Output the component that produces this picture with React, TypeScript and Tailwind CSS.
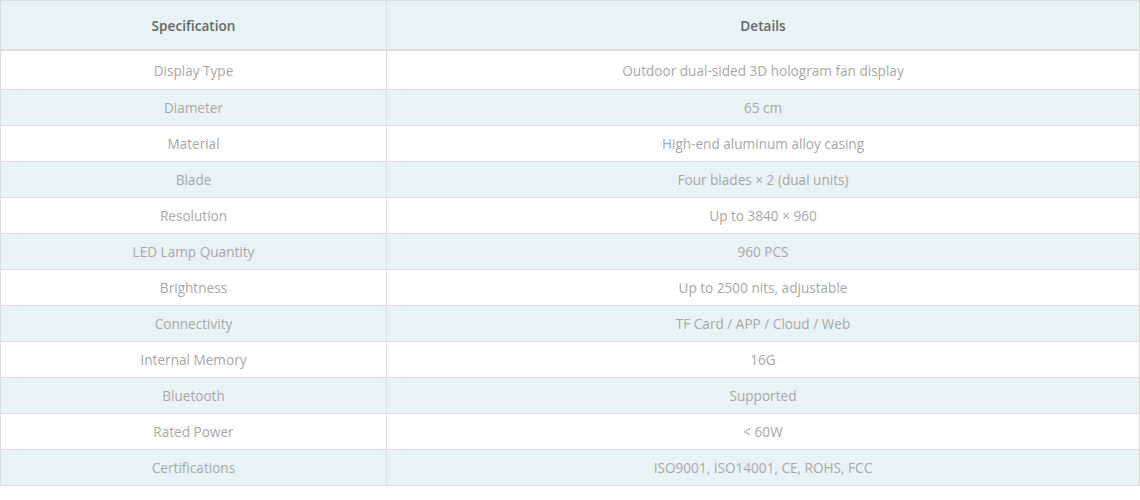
const specs: [string, string][] = [
  ["Display Type", "Outdoor dual-sided 3D hologram fan display"],
  ["Diameter", "65 cm"],
  ["Material", "High-end aluminum alloy casing"],
  ["Blade", "Four blades × 2 (dual units)"],
  ["Resolution", "Up to 3840 × 960"],
  ["LED Lamp Quantity", "960 PCS"],
  ["Brightness", "Up to 2500 nits, adjustable"],
  ["Connectivity", "TF Card / APP / Cloud / Web"],
  ["Internal Memory", "16G"],
  ["Bluetooth", "Supported"],
  ["Rated Power", "< 60W"],
  ["Certifications", "ISO9001, ISO14001, CE, ROHS, FCC"],
];

export default function App() {
  return (
    <div className="w-[1140px] bg-white font-['Open_Sans',sans-serif]">
      <div className="border border-[#dddddd]">
        {/* header */}
        <div className="grid grid-cols-[386px_1fr] h-[50px] bg-[#e9f3f5] border-b-2 border-[#dddddd] text-[13.6px] font-semibold text-[#666666]">
          <div className="flex items-center justify-center border-r border-[#dddddd] pt-[2px]">Specification</div>
          <div className="flex items-center justify-center pt-[2px]">Details</div>
        </div>
        {specs.map(([name, value], i) => (
          <div
            key={name}
            className={`grid grid-cols-[386px_1fr] text-[13.6px] text-[#a8a8a8] ${i === 0 ? "h-[39px]" : i === specs.length - 1 ? "h-[35px]" : "h-[36px]"} ${i < specs.length - 1 ? "border-b border-[#dddddd]" : ""} ${i % 2 === 1 ? "bg-[#e9f3f5]" : "bg-white"}`}
          >
            <div className="flex items-center justify-center border-r border-[#dddddd] pt-[2px]">{name}</div>
            <div className="flex items-center justify-center pt-[2px]">{value}</div>
          </div>
        ))}
      </div>
    </div>
  );
}
